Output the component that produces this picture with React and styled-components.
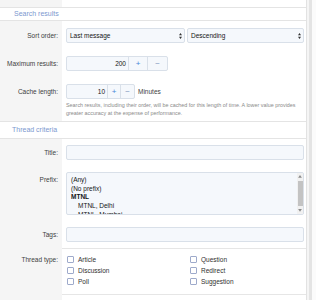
import React from 'react';
import styled, { createGlobalStyle } from 'styled-components';

const Global = createGlobalStyle`
  html, body { margin: 0; padding: 0; background: #fff; }
  body { font-family: "Liberation Sans", Arial, sans-serif; color: #141414; }
`;

const Page = styled.div`
  display: flex;
  width: 316px;
  height: 300px;
  overflow: hidden;
`;

const Block = styled.div`
  width: 307px;
  flex: none;
  border-right: 1px solid #e2e2e2;
  box-sizing: border-box;
  background: #fff;
`;

const Gutter = styled.div`
  flex: 1;
  background: linear-gradient(to right, #f5f5f5 0 2px, #e4e4e4 2px 5px, #fbfbfb 5px);
`;

const FormRow = styled.div`
  display: flex;
  border-bottom: ${p => (p.$line ? '1px solid #e6e6e6' : 'none')};
`;

const Label = styled.div`
  width: 62px;
  flex: none;
  box-sizing: border-box;
  background: #f5f5f5;
  padding: ${p => p.$pt ?? 6}px 4px ${p => p.$pb ?? 6}px 0;
  text-align: right;
  font-size: 6.5px;
  line-height: ${p => p.$lh ?? 15}px;
  color: #404040;
  min-height: ${p => p.$h ?? 0}px;
`;

const Value = styled.div`
  flex: 1;
  min-width: 0;
  padding: ${p => p.$pt ?? 6}px 2px ${p => p.$pb ?? 6}px 4px;
  border-bottom: ${p => (p.$sep ? '1px solid #e6e6e6' : 'none')};
`;

const SectionHeader = styled.div`
  height: ${p => p.$h}px;
  line-height: ${p => p.$h}px;
  border-top: 1px solid #e4e4e4;
  border-bottom: 1px solid #e4e4e4;
  padding-left: ${p => p.$pl}px;
  font-size: 7px;
  color: #7d98cf;
  background: #fff;
`;

const Field = styled.div`
  box-sizing: border-box;
  height: 15px;
  border: 1px solid #d9e0e9;
  border-radius: 2px;
  background: #f5f8fc;
  font-size: 6.5px;
  line-height: 13px;
`;

const SelectBox = styled(Field)`
  display: flex;
  align-items: center;
  justify-content: space-between;
  padding: 0 2px 0 3px;
  width: ${p => (p.$w ? `${p.$w}px` : 'auto')};
  flex: ${p => (p.$w ? 'none' : '1')};
`;

const Pair = styled.div`
  display: flex;
  gap: 2px;
`;

const NumberWrap = styled.div`
  display: flex;
  align-items: center;
  gap: 3px;
`;

const NumberBox = styled(Field)`
  display: flex;
  width: ${p => p.$w}px;
`;

const NumberInput = styled.div`
  flex: 1;
  text-align: right;
  padding-right: 2px;
`;

const SpinButton = styled.div`
  width: ${p => p.$w}px;
  flex: none;
  border-left: 1px solid #d9e0e9;
  text-align: center;
  font-size: 8px;
  line-height: 13px;
  color: ${p => (p.$plus ? '#4a86d8' : '#8298bf')};
`;

const Unit = styled.span`
  font-size: 6.5px;
  color: #404040;
`;

const Hint = styled.div`
  margin-top: 2px;
  font-size: 5.4px;
  line-height: 8px;
  color: #8a8a8a;
`;

const TextInput = styled(Field)``;

const MultiSelect = styled(Field)`
  height: 43px;
  display: flex;
  overflow: hidden;
`;

const OptionList = styled.div`
  flex: 1;
  padding: 3px 0 0 4px;
  overflow: hidden;
`;

const Option = styled.div`
  font-size: 6.5px;
  line-height: 8.7px;
  white-space: nowrap;
  padding-left: ${p => (p.$indent ? 7 : 0)}px;
  font-weight: ${p => (p.$bold ? 700 : 400)};
`;

const ScrollTrack = styled.div`
  width: 6px;
  flex: none;
  background: #f1f1f1;
  display: flex;
  flex-direction: column;
  align-items: center;
  padding: 2px 0;
  box-sizing: border-box;
`;

const ScrollThumb = styled.div`
  width: 5px;
  height: 27px;
  margin: 3px 0;
  background: #c3c3c3;
`;

const CheckGrid = styled.div`
  display: grid;
  grid-template-columns: 123px 1fr;
  grid-auto-flow: column;
  grid-template-rows: repeat(3, 11px);
`;

const CheckItem = styled.label`
  display: flex;
  align-items: center;
  gap: 4px;
  font-size: 6.5px;
  line-height: 11px;
  color: #303030;
  padding-left: 1px;
`;

const Box = styled.span`
  width: 5px;
  height: 5px;
  border: 1px solid #9eaacb;
  border-radius: 1px;
  background: #fff;
  flex: none;
`;

const Arrows = () => (
  <svg width="3" height="6" viewBox="0 0 3 6">
    <path d="M1.5 0 L3 2.3 L0 2.3 Z M1.5 6 L3 3.7 L0 3.7 Z" fill="#333" />
  </svg>
);

const Tri = ({ up }) => (
  <svg width="4" height="3" viewBox="0 0 4 3">
    <path d={up ? 'M2 0 L4 3 L0 3 Z' : 'M2 3 L4 0 L0 0 Z'} fill="#8a8a8a" />
  </svg>
);

export default function App() {
  return (
    <Page>
      <Global />
      <Block>
        <FormRow>
          <Label $pt={0} $pb={0} $h={7} $lh={7} />
          <Value $pt={0} $pb={0} />
        </FormRow>

        <SectionHeader $h={12} $pl={14}>Search results</SectionHeader>

        <FormRow>
          <Label $pt={7} $pb={6}>Sort order:</Label>
          <Value $pt={7} $pb={6}>
            <Pair>
              <SelectBox $w={119}>
                <span>Last message</span>
                <Arrows />
              </SelectBox>
              <SelectBox>
                <span>Descending</span>
                <Arrows />
              </SelectBox>
            </Pair>
          </Value>
        </FormRow>

        <FormRow>
          <Label $pt={7} $pb={6}>Maximum results:</Label>
          <Value $pt={7} $pb={6}>
            <NumberWrap>
              <NumberBox $w={102}>
                <NumberInput>200</NumberInput>
                <SpinButton $w={18} $plus>+</SpinButton>
                <SpinButton $w={19}>−</SpinButton>
              </NumberBox>
            </NumberWrap>
          </Value>
        </FormRow>

        <FormRow>
          <Label $pt={7} $pb={4}>Cache length:</Label>
          <Value $pt={7} $pb={4}>
            <NumberWrap>
              <NumberBox $w={69}>
                <NumberInput>10</NumberInput>
                <SpinButton $w={12} $plus>+</SpinButton>
                <SpinButton $w={13}>−</SpinButton>
              </NumberBox>
              <Unit>Minutes</Unit>
            </NumberWrap>
            <Hint>
              Search results, including their order, will be cached for this length of time. A lower value provides greater accuracy at the expense of performance.
            </Hint>
          </Value>
        </FormRow>

        <SectionHeader $h={16} $pl={12}>Thread criteria</SectionHeader>

        <FormRow>
          <Label>Title:</Label>
          <Value>
            <TextInput />
          </Value>
        </FormRow>

        <FormRow>
          <Label>Prefix:</Label>
          <Value>
            <MultiSelect>
              <OptionList>
                <Option>(Any)</Option>
                <Option>(No prefix)</Option>
                <Option $bold>MTNL</Option>
                <Option $indent>MTNL, Delhi</Option>
                <Option $indent>MTNL, Mumbai</Option>
              </OptionList>
              <ScrollTrack>
                <Tri up />
                <ScrollThumb />
                <Tri />
              </ScrollTrack>
            </MultiSelect>
          </Value>
        </FormRow>

        <FormRow>
          <Label>Tags:</Label>
          <Value $sep>
            <TextInput />
          </Value>
        </FormRow>

        <FormRow>
          <Label $pt={5} $pb={7} $lh={11}>Thread type:</Label>
          <Value $pt={5} $pb={7} $sep>
            <CheckGrid>
              <CheckItem><Box />Article</CheckItem>
              <CheckItem><Box />Discussion</CheckItem>
              <CheckItem><Box />Poll</CheckItem>
              <CheckItem><Box />Question</CheckItem>
              <CheckItem><Box />Redirect</CheckItem>
              <CheckItem><Box />Suggestion</CheckItem>
            </CheckGrid>
          </Value>
        </FormRow>

        <FormRow>
          <Label $pt={0} $pb={0} $h={10} />
          <Value $pt={0} $pb={0} />
        </FormRow>
      </Block>
      <Gutter />
    </Page>
  );
}
